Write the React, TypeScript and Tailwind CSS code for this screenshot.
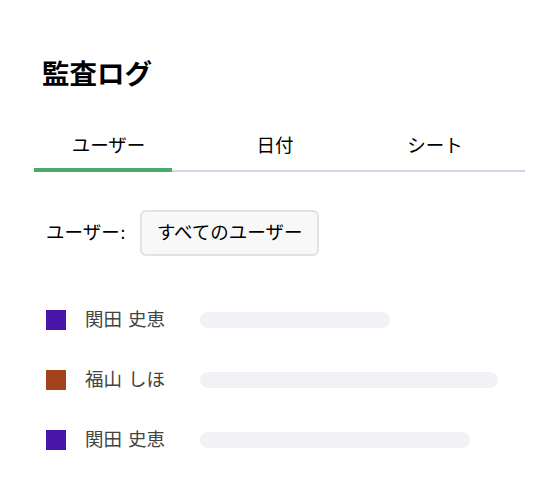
import { useState } from "react";

type Entry = { name: string; color: string; bar: string };

const entries: Entry[] = [
  { name: "関田 史恵", color: "bg-[#4a16a9]", bar: "w-[190px]" },
  { name: "福山 しほ", color: "bg-[#a3431e]", bar: "w-[298px]" },
  { name: "関田 史恵", color: "bg-[#4a16a9]", bar: "w-[270px]" },
];

const tabs = [
  { label: "ユーザー", width: "w-[149px]" },
  { label: "日付", width: "w-[184px]" },
  { label: "シート", width: "w-[136px]" },
];

export default function App() {
  const [active, setActive] = useState(0);

  return (
    <div
      className="w-[560px] h-[500px] bg-white text-black"
      style={{ fontFamily: '"DejaVu Sans", "Noto Sans CJK JP", sans-serif' }}
    >
      <div className="pt-[55px] pl-[34px] pr-[35px]">
        <h1 className="pl-[8px] text-[27.5px] leading-[38px] font-bold">監査ログ</h1>

        {/* tabs */}
        <div className="relative mt-[37px]">
          <div className="flex">
            {tabs.map((t, i) => (
              <button
                key={t.label}
                onClick={() => setActive(i)}
                className={`${t.width} h-[38px] text-[18.5px] leading-[26px] text-center pb-[6px]`}
              >
                {t.label}
              </button>
            ))}
          </div>
          <div className="h-[2px] mt-[2px] bg-[#d3d5eb]" />
          {active === 0 && (
            <div className="absolute left-0 bottom-0 h-[4px] w-[138px] bg-[#4caa6c]" />
          )}
        </div>

        {/* filter */}
        <div className="flex items-center mt-[38px] pl-[12px]">
          <span className="text-[18.5px] leading-[26px] mr-[14px]">ユーザー:</span>
          <button className="h-[46px] px-[15px] rounded-[6px] border-2 border-[#e2e2e2] bg-[#f8f8f8] text-[18.5px] leading-[26px]">
            すべてのユーザー
          </button>
        </div>

        {/* entries */}
        <div className="flex flex-col gap-[40px] mt-[54px] pl-[12px]">
          {entries.map((e, i) => (
            <div key={i} className="flex items-center h-[20px]">
              <span className={`w-[20px] h-[20px] ${e.color}`} />
              <span className="w-[134px] pl-[19px] text-[18.5px] leading-[26px] text-[#444]">
                {e.name}
              </span>
              <span className={`h-[16px] ${e.bar} rounded-full bg-[#f1f1f6]`} />
            </div>
          ))}
        </div>
      </div>
    </div>
  );
}
